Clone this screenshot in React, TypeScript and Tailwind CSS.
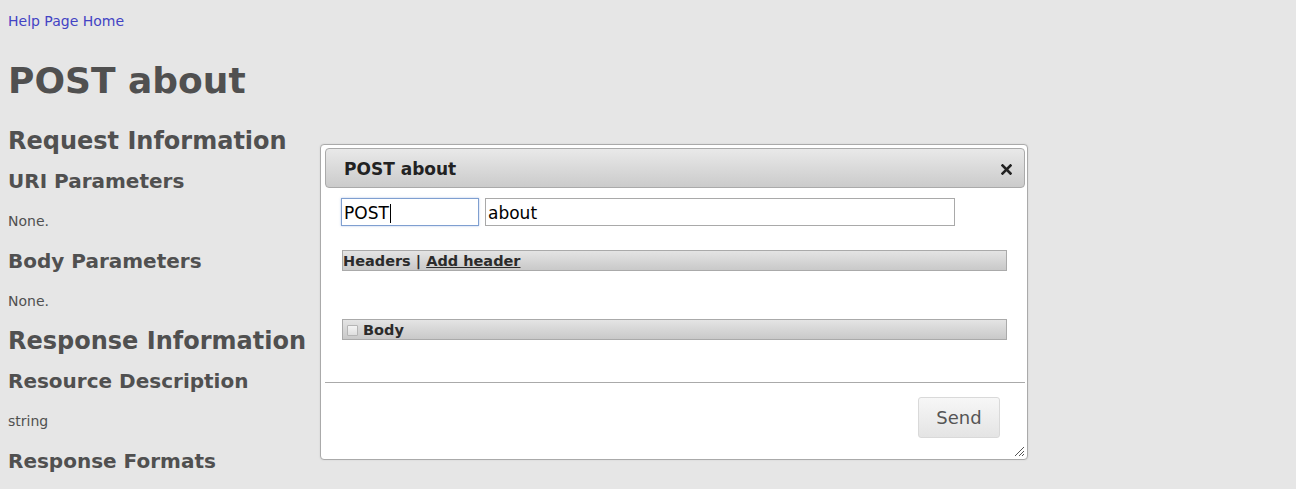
import type { ReactElement } from "react";

const FONT = { fontFamily: '"DejaVu Sans", Verdana, sans-serif' };

function Row({
  children,
  className,
}: {
  children: React.ReactNode;
  className?: string;
}): ReactElement {
  return (
    <div className={`flex h-10 items-center whitespace-nowrap ${className ?? ""}`}>
      {children}
    </div>
  );
}

function CloseIcon(): ReactElement {
  return (
    <svg width="11" height="11" viewBox="0 0 11 11" className="block">
      <path d="M1.5 1.5 L9.5 9.5 M9.5 1.5 L1.5 9.5" stroke="#222" strokeWidth="2.6" strokeLinecap="square" />
    </svg>
  );
}

function ResizeGrip(): ReactElement {
  return (
    <svg width="12" height="12" viewBox="0 0 12 12" className="block">
      <path d="M11 2 L2 11 M11 6 L6 11 M11 9 L9 11" stroke="#555" strokeWidth="1" />
    </svg>
  );
}

function Bar({ children }: { children: React.ReactNode }): ReactElement {
  return (
    <div className="flex h-[21px] w-[665px] items-center border border-[#aaaaaa] bg-gradient-to-b from-[#e4e4e4] to-[#c9c9c9] pt-[2px] text-[14.5px] font-bold leading-none text-[#2b2b2b]">
      {children}
    </div>
  );
}

export default function App(): ReactElement {
  return (
    <div className="relative h-[489px] w-full overflow-hidden bg-[#e6e6e6]" style={FONT}>
      <div className="pl-2 pt-px text-[#505050]">
        <Row>
          <a className="text-[14px] text-[#4343c4]" href="#">
            Help Page Home
          </a>
        </Row>
        <Row className="mt-5">
          <h1 className="text-[36px] font-bold">POST about</h1>
        </Row>
        <Row className="mt-5">
          <h2 className="text-[24px] font-bold">Request Information</h2>
        </Row>
        <Row>
          <h3 className="text-[20px] font-bold">URI Parameters</h3>
        </Row>
        <Row>
          <p className="text-[14px]">None.</p>
        </Row>
        <Row>
          <h3 className="text-[20px] font-bold">Body Parameters</h3>
        </Row>
        <Row>
          <p className="text-[14px]">None.</p>
        </Row>
        <Row>
          <h2 className="text-[24px] font-bold">Response Information</h2>
        </Row>
        <Row>
          <h3 className="text-[20px] font-bold">Resource Description</h3>
        </Row>
        <Row>
          <p className="text-[14px]">string</p>
        </Row>
        <Row>
          <h3 className="text-[20px] font-bold">Response Formats</h3>
        </Row>
      </div>

      {/* dialog */}
      <div className="absolute left-[320px] top-[144px] flex h-[316px] w-[708px] flex-col rounded-[4px] border border-[#aaaaaa] bg-white pl-[4px] pr-[2px] pt-[3px] shadow-[0_0_2px_rgba(0,0,0,0.1)]">
        <div className="flex h-[40px] items-center justify-between rounded-[4px] border border-[#aaaaaa] bg-gradient-to-b from-[#e9e9e9] to-[#cbcbcb] pl-[18px] pr-[12px] pt-[3px]">
          <span className="text-[17px] font-bold text-[#222222]">POST about</span>
          <CloseIcon />
        </div>

        <div className="flex flex-col pl-[16px] pt-[10px]">
          <div className="flex gap-[6px]">
            <div className="flex h-[28px] w-[138px] items-center border border-[#7f9fd0] pl-[2px] pt-[3px] text-[17px] text-black shadow-[0_0_2px_rgba(100,140,210,0.5)]">
              POST<span className="ml-px inline-block h-[19px] w-px bg-black" />
            </div>
            <div className="flex h-[28px] w-[470px] items-center border border-[#a9a9a9] pl-[2px] pt-[3px] text-[17px] text-black">
              about
            </div>
          </div>

          <div className="ml-px mt-[24px]">
            <Bar>
              <span>Headers |&nbsp;</span>
              <span className="underline">Add header</span>
            </Bar>
          </div>

          <div className="ml-px mt-[48px]">
            <Bar>
              <span className="ml-[4px] mr-[5px] inline-block h-[11px] w-[11px] rounded-[1px] border border-[#b5b5b5] bg-gradient-to-b from-[#f4f4f4] to-[#dedede]" />
              <span>Body</span>
            </Bar>
          </div>
        </div>

        <div className="mt-[42px] h-px bg-[#aaaaaa]" />

        <div className="flex justify-end pr-[25px] pt-[14px]">
          <button className="h-[41px] w-[82px] rounded-[3px] border border-[#d9d9d9] bg-gradient-to-b from-[#f7f7f7] to-[#e4e4e4] text-[18px] text-[#555555]">
            Send
          </button>
        </div>

        <div className="absolute bottom-[2px] right-[2px]">
          <ResizeGrip />
        </div>
      </div>
    </div>
  );
}
